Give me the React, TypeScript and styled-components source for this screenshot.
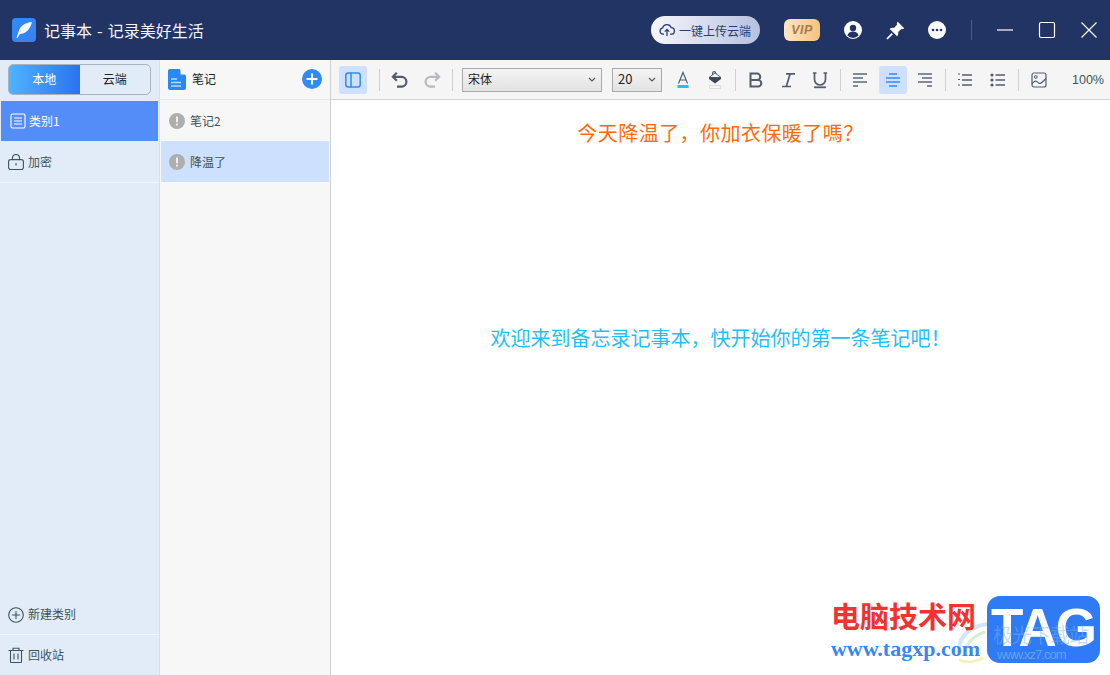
import React from "react";
import styled, { createGlobalStyle } from "styled-components";

const Global = createGlobalStyle`
  html, body { margin: 0; padding: 0; background: #fff; }
  body { width: 1110px; height: 675px; overflow: hidden; font-family: "Noto Sans CJK SC", "Liberation Sans", sans-serif; }
  * { box-sizing: border-box; }
`;

const Page = styled.div`
  position: relative; width: 1110px; height: 675px; display: flex; flex-direction: column; overflow: hidden;
`;
const TitleBar = styled.header`
  height: 60px; flex: none; background: #223464; display: flex; align-items: center; padding-left: 12px;
`;
const AppLogo = styled.div`
  width: 24px; height: 24px; border-radius: 4px; background: linear-gradient(135deg, #2f8bf8, #3d7ff0);
  display: flex; align-items: center; justify-content: center;
`;
const AppTitle = styled.div`
  margin-left: 8px; color: #f2f4f9; font-size: 16px; line-height: 24px; white-space: pre; word-spacing: 1.5px;
`;
const TitleRight = styled.div`
  margin-left: auto; display: flex; align-items: center;
`;
const UploadPill = styled.div`
  width: 109px; height: 28px; border-radius: 14px; background: linear-gradient(90deg, #f6f7fc, #b7c0e0);
  display: flex; align-items: center; padding-left: 8px; gap: 4px; color: #2c3e70; font-size: 12px; margin-right: 24px;
`;
const VipBadge = styled.div`
  width: 36px; height: 22px; border-radius: 6px; background: linear-gradient(90deg, #fde6c6, #f6c27e);
  color: #a67c48; font: italic 700 12.5px "Liberation Sans", sans-serif; letter-spacing: 0.5px;
  display: flex; align-items: center; justify-content: center; margin-right: 12px;
`;
const TitleIcon = styled.div`
  width: 42px; height: 30px; display: flex; align-items: center; justify-content: center;
`;
const TitleSep = styled.div`
  width: 1px; height: 20px; background: #4c5b86; margin: 0 12px 0 13px;
`;

const Body = styled.div`
  flex: 1; display: flex; min-height: 0;
`;
const Sidebar = styled.aside`
  width: 160px; flex: none; background: #e2ecf9; border-right: 1px solid #dcdfe4; display: flex; flex-direction: column;
`;
const SegmentWrap = styled.div`
  height: 41px; padding: 4px 8px 6px;
`;
const Segment = styled.div`
  height: 31px; width: 143px; display: flex; border: 1px solid #a9b2bf; border-radius: 5px; overflow: hidden;
`;
const SegmentItem = styled.div<{ $active?: boolean }>`
  flex: 1; display: flex; align-items: center; justify-content: center; font-size: 12px; padding-bottom: 2px;
  color: ${p => (p.$active ? "#fff" : "#222")};
  background: ${p => (p.$active ? "linear-gradient(90deg, #50b2ff, #2a73ef)" : "transparent")};
`;
const RowLabel = styled.span`
  padding-bottom: 2px;
`;
const CategoryRow = styled.div<{ $active?: boolean }>`
  height: 41px; display: flex; align-items: center; font-size: 12px;
  gap: ${p => (p.$active ? "3px" : "4px")};
  padding-left: ${p => (p.$active ? "9px" : "8px")};
  margin: ${p => (p.$active ? "0 1px" : "0")};
  color: ${p => (p.$active ? "#fff" : "#3d5456")};
  background: ${p => (p.$active ? "#558df8" : "transparent")};
  border-bottom: 1px solid ${p => (p.$active ? "#e2ecf9" : "#f2f6fc")};
`;
const SidebarFoot = styled.div`
  margin-top: auto; display: flex; flex-direction: column;
`;
const FootRow = styled.div<{ $last?: boolean }>`
  height: 40px; display: flex; align-items: center; gap: 4px; padding-left: 8px;
  font-size: 12px; color: #3d5456; border-bottom: ${p => (p.$last ? "none" : "1px solid #f2f6fc")};
`;

const NoteColumn = styled.section`
  width: 171px; flex: none; background: #f7f7f7; border-right: 1px solid #cfcfcf; display: flex; flex-direction: column;
`;
const NoteHead = styled.div`
  height: 40px; display: flex; align-items: center; padding: 0 8px; border-bottom: 1px solid #e3e8ef;
`;
const NoteHeadTitle = styled.span`
  margin-left: 6px; font-size: 12px; color: #222; padding-bottom: 2px;
`;
const AddButton = styled.div`
  margin-left: auto; margin-top: -1px; width: 20px; height: 20px; display: flex;
`;
const NoteRow = styled.div<{ $active?: boolean }>`
  height: 41px; margin: 0 1px; display: flex; align-items: center; gap: 5px; padding: 1px 0 0 8px; font-size: 12px; color: #3d5456;
  background: ${p => (p.$active ? "#cde0fd" : "transparent")};
`;

const Main = styled.main`
  flex: 1; display: flex; flex-direction: column; min-width: 0;
`;
const Toolbar = styled.div`
  height: 40px; flex: none; background: #f5f5f5; border-bottom: 1px solid #d4d4d4; display: flex; align-items: center; padding-left: 8px; gap: 6px;
`;
const ToolButton = styled.div<{ $active?: boolean; $after?: number }>`
  width: 28px; height: 28px; border-radius: 3px; display: flex; align-items: center; justify-content: center;
  margin-right: ${p => p.$after ?? 0}px;
  background: ${p => (p.$active ? "#cde0fd" : "transparent")};
`;
const ToolGroup = styled.div<{ $cols: string; $before?: number }>`
  display: grid; grid-template-columns: ${p => p.$cols};
  margin-left: ${p => p.$before ?? 0}px;
`;
const ToolSep = styled.div`
  width: 1px; height: 22px; background: #d0d0d0;
`;
const FakeSelect = styled.div<{ $w: number; $ml?: number }>`
  width: ${p => p.$w}px; height: 24px; margin-left: ${p => p.$ml ?? 0}px;
  border: 1px solid #a9a9a9; background: linear-gradient(#f4f4f4, #e3e3e3);
  display: flex; align-items: center; justify-content: space-between; padding: 0 5px; font-size: 12px; color: #222;
`;
const SelectValue = styled.span<{ $size?: number }>`
  padding-bottom: 2px; font-size: ${p => p.$size ?? 12}px;
`;
const Zoom = styled.div`
  margin-left: auto; padding-right: 6px; font: 12.5px "Liberation Sans", sans-serif; color: #3d5456;
`;
const Editor = styled.div`
  flex: 1; background: #fff; padding-top: 21px; text-align: center; font-family: "Noto Sans CJK SC", sans-serif;
`;
const NoteHeading = styled.div`
  font-size: 20px; line-height: 24px; color: #ff6a0a; letter-spacing: 0.45px;
`;
const NoteBody = styled.div`
  font-size: 20px; line-height: 24px; margin-top: 181px; color: #1fc0f5;
`;

const Watermark = styled.div`
  position: absolute; right: 10px; bottom: 11px; display: flex; align-items: flex-start; gap: 7px;
`;
const MarkSwirl = styled.div`
  position: absolute; left: 126px; top: 26px; width: 32px; height: 42px; display: flex;
`;
const MarkText = styled.div`
  position: relative; display: flex; flex-direction: column; align-items: flex-start; padding-top: 2px;
`;
const MarkCn = styled.div`
  position: relative; font-size: 29px; line-height: 34px; font-weight: 700; color: #f2322f;
`;
const MarkUrl = styled.div`
  position: relative; font: 700 22px/30px "Liberation Serif", serif; color: #3b87ee; margin-top: 2px;
`;
const TagBox = styled.div`
  position: relative; width: 113px; height: 67px; border-radius: 13px; background: #2f7bf5; color: #fff;
  font: 700 53px/64px "Liberation Sans", sans-serif; letter-spacing: -1px; overflow: hidden; text-align: center;
`;
const TagGhost = styled.div`
  position: absolute; left: 6px; top: 26px; font: 400 20px/26px "Noto Sans CJK SC", sans-serif; color: rgba(120,180,245,.45); white-space: nowrap;
`;
const TagGhostUrl = styled.div`
  position: absolute; left: 10px; bottom: 0; font: 400 13px/16px "Liberation Sans", sans-serif; color: rgba(150,200,250,.5); white-space: nowrap;
`;

const G = "#525c70";

const Svg: React.FC<{ s?: number; w?: number; h?: number; children: React.ReactNode }> = ({ s = 20, w, h, children }) => (
  <svg width={w ?? s} height={h ?? s} viewBox={`0 0 ${w ?? s} ${h ?? s}`} fill="none">{children}</svg>
);

const Line: React.FC<{ lines: [number, number, number][]; c: string; sw?: number }> = ({ lines, c, sw = 1.4 }) => (
  <>{lines.map(([x1, x2, y], i) => <path key={i} d={`M${x1} ${y}H${x2}`} stroke={c} strokeWidth={sw} />)}</>
);

const Alert = () => (
  <Svg s={16}>
    <circle cx="8" cy="8" r="8" fill="#aeaeae" />
    <path d="M8 3.6v5.6" stroke="#eee" strokeWidth="2" />
    <circle cx="8" cy="11.7" r="1.1" fill="#eee" />
  </Svg>
);

const Chevron = () => (
  <Svg w={8} h={6}><path d="M1 1l3 3 3-3" stroke="#555" strokeWidth="1.1" /></Svg>
);

export default function App() {
  return (
    <Page>
      <Global />
      <TitleBar>
        <AppLogo>
          <Svg s={18}>
            <path d="M17 1C10 1.500 5 5 3.500 11L1.500 16.500l1 .4 2.300-4C10 13 15 9 17 1z" fill="#fff" opacity=".94" />
          </Svg>
        </AppLogo>
        <AppTitle>记事本 - 记录美好生活</AppTitle>
        <TitleRight>
          <UploadPill>
            <Svg s={16}>
              <path d="M5 12.2H4A3.2 3.2 0 0 1 3.6 5.9 4.5 4.5 0 0 1 12.2 5.6 3.3 3.3 0 0 1 12 12.2H11" stroke="#2c3e70" strokeWidth="1.3" />
              <path d="M8 14V7.6M5.8 9.6 8 7.4l2.2 2.2" stroke="#2c3e70" strokeWidth="1.3" />
            </Svg>
            一键上传云端
          </UploadPill>
          <VipBadge>VIP</VipBadge>
          <TitleIcon>
            <Svg s={18}>
              <circle cx="9" cy="9" r="9" fill="#fff" />
              <circle cx="9" cy="7" r="3.2" fill="#223464" />
              <path d="M3.4 14.6c.6-2.900 2.900-4.200 5.600-4.200s5 1.300 5.600 4.200A8 8 0 0 1 9 17a8 8 0 0 1-5.600-2.400z" fill="#223464" />
            </Svg>
          </TitleIcon>
          <TitleIcon>
            <Svg s={19}>
              <path d="M11.800.8 18.200 7.200 16.800 8.200 15.600 7.800 12.100 11C12.600 12.700 12.300 14.100 11.100 15.300L3.700 7.900C4.900 6.700 6.300 6.400 8 6.900L11.200 3.400 10.800 2.300z" fill="#fff" />
              <path d="M6.200 12.600 1 18" stroke="#fff" strokeWidth="1.800" />
            </Svg>
          </TitleIcon>
          <TitleIcon>
            <Svg s={18}>
              <circle cx="9" cy="9" r="9" fill="#fff" />
              <circle cx="5" cy="9" r="1.3" fill="#223464" />
              <circle cx="9" cy="9" r="1.3" fill="#223464" />
              <circle cx="13" cy="9" r="1.3" fill="#223464" />
            </Svg>
          </TitleIcon>
          <TitleSep />
          <TitleIcon>
            <Svg s={18}><path d="M1 9h16" stroke="#c9ccd8" strokeWidth="1.6" /></Svg>
          </TitleIcon>
          <TitleIcon>
            <Svg s={18}><rect x="1.500" y="1.500" width="15" height="15" rx="1.500" stroke="#fff" strokeWidth="1.200" /></Svg>
          </TitleIcon>
          <TitleIcon>
            <Svg s={18}><path d="M1.500 1.500l15 15M16.500 1.500l-15 15" stroke="#eef0f6" strokeWidth="1.300" /></Svg>
          </TitleIcon>
        </TitleRight>
      </TitleBar>
      <Body>
        <Sidebar>
          <SegmentWrap>
            <Segment>
              <SegmentItem $active>本地</SegmentItem>
              <SegmentItem>云端</SegmentItem>
            </Segment>
          </SegmentWrap>
          <CategoryRow $active>
            <Svg s={16}>
              <rect x="1" y="1" width="14" height="14" rx="1.500" stroke="#fff" strokeWidth="1.100" />
              <path d="M4 5h8M4 8h8M4 11h8" stroke="#fff" strokeWidth="1.100" />
            </Svg>
            <RowLabel>类别1</RowLabel>
          </CategoryRow>
          <CategoryRow>
            <Svg s={16}>
              <rect x=".6" y="5.600" width="14.800" height="10" rx="2" stroke="#3d5456" strokeWidth="1.100" />
              <path d="M4.500 5.500V4a3.500 3.500 0 0 1 7 0v1.500M8 9v2.500" stroke="#3d5456" strokeWidth="1.100" />
            </Svg>
            <RowLabel>加密</RowLabel>
          </CategoryRow>
          <SidebarFoot>
            <FootRow>
              <Svg s={16}>
                <circle cx="8" cy="8" r="7.300" stroke="#3d5456" strokeWidth="1.100" />
                <path d="M8 4v8M4 8h8" stroke="#3d5456" strokeWidth="1.100" />
              </Svg>
              <RowLabel>新建类别</RowLabel>
            </FootRow>
            <FootRow $last>
              <Svg s={16}>
                <path d="M.5 3.500h15M5 3.300V1.200h6v2.100M2.500 3.500v11.200c0 .5.3.8.8.8h9.400c.5 0 .8-.3.8-.8V3.500M6 6.500v6M10 6.500v6" stroke="#3d5456" strokeWidth="1.100" />
              </Svg>
              <RowLabel>回收站</RowLabel>
            </FootRow>
          </SidebarFoot>
        </Sidebar>
        <NoteColumn>
          <NoteHead>
            <Svg w={18} h={21}>
              <path d="M2 0h9.500L18 6.500V19a2 2 0 0 1-2 2H2a2 2 0 0 1-2-2V2a2 2 0 0 1 2-2z" fill="#2a88f5" />
              <path d="M12.500 0 18 5.500h-5.500z" fill="#fff" />
              <path d="M3 10h6M3 13.500h10M3 17h10" stroke="#bcdcfc" strokeWidth="1.300" />
            </Svg>
            <NoteHeadTitle>笔记</NoteHeadTitle>
            <AddButton>
              <Svg s={20}>
                <circle cx="10" cy="10" r="10" fill="#2f8bf6" />
                <path d="M10 4.500v11M4.500 10h11" stroke="#fff" strokeWidth="2" />
              </Svg>
            </AddButton>
          </NoteHead>
          <NoteRow><Alert /><RowLabel>笔记2</RowLabel></NoteRow>
          <NoteRow $active><Alert /><RowLabel>降温了</RowLabel></NoteRow>
        </NoteColumn>
        <Main>
          <Toolbar>
            <ToolButton $active $after={6}>
              <Svg s={16}>
                <rect x=".8" y="1" width="14.400" height="14" rx="2.500" stroke="#2f8bf6" strokeWidth="1.500" />
                <path d="M6 1v14" stroke="#2f8bf6" strokeWidth="1.500" />
              </Svg>
            </ToolButton>
            <ToolSep />
            <ToolGroup $cols="32px 28px">
              <ToolButton>
                <Svg s={18}>
                  <path d="M5.800 1.800 1.900 5.800l3.900 3.900" stroke={G} strokeWidth="2.200" />
                  <path d="M2 5.800h8.500a4.900 4.900 0 0 1 0 9.800H6" stroke={G} strokeWidth="2.200" />
                </Svg>
              </ToolButton>
              <ToolButton>
                <Svg s={18}>
                  <path d="M12.200 1.800l3.900 4-3.900 3.900" stroke="#b5b9c0" strokeWidth="2.200" />
                  <path d="M16 5.800H7.500a4.900 4.900 0 0 0 0 9.800H12" stroke="#b5b9c0" strokeWidth="2.200" />
                </Svg>
              </ToolButton>
            </ToolGroup>
            <ToolSep />
            <FakeSelect $w={140} $ml={3}>
              <SelectValue>宋体</SelectValue>
              <Chevron />
            </FakeSelect>
            <FakeSelect $w={50} $ml={4}>
              <SelectValue $size={13}>20</SelectValue>
              <Chevron />
            </FakeSelect>
            <ToolGroup $cols="32px 28px" $before={1}>
              <ToolButton>
                <Svg s={18}>
                  <path d="M4.500 12.500 9 1.500l4.500 11M6 9h6" stroke={G} strokeWidth="1.200" />
                  <rect x="3.500" y="14" width="11" height="3" fill="#1fc0f5" />
                </Svg>
              </ToolButton>
              <ToolButton>
                <Svg s={18}>
                  <path d="M6.500 4V2.200A1.600 1.600 0 0 1 9.700 2.200V4" stroke={G} strokeWidth="1.200" />
                  <path d="M3 6.500 9 2l6 4.500z" fill="#f5f5f5" stroke={G} strokeWidth="1" />
                  <path d="M3 6.500h12V8l-6 4.500L3 8z" fill="#3f4759" />
                  <rect x="3.500" y="14.500" width="11" height="3" stroke="#dcdcdc" />
                </Svg>
              </ToolButton>
            </ToolGroup>
            <ToolSep />
            <ToolGroup $cols="32px 32px 28px">
              <ToolButton>
                <Svg s={18}>
                  <path d="M3.500 2.500h6.500a3.200 3.200 0 0 1 0 6.500H3.500zM3.500 9h7.500a3.300 3.300 0 0 1 0 6.600H3.500z" stroke={G} strokeWidth="2" />
                </Svg>
              </ToolButton>
              <ToolButton>
                <Svg s={18}>
                  <path d="M7 2.800h9M3 15.500h9M11 3 7.500 15" stroke={G} strokeWidth="1.700" />
                </Svg>
              </ToolButton>
              <ToolButton>
                <Svg s={18}>
                  <path d="M3.500 2v6.500a5.500 5.500 0 0 0 11 0V2M2 2h3.500M12.500 2H16" stroke={G} strokeWidth="1.700" />
                  <path d="M3 16.300h12" stroke={G} strokeWidth="1.800" />
                </Svg>
              </ToolButton>
            </ToolGroup>
            <ToolSep />
            <ToolGroup $cols="33px 32px 28px" $before={-1}>
              <ToolButton>
                <Svg s={16}>
                  <Line c={G} sw={1.4} lines={[[1, 15, 2], [1, 11, 6], [1, 15, 10], [1, 6, 14]]} />
                </Svg>
              </ToolButton>
              <ToolButton $active>
                <Svg s={16}>
                  <Line c="#2f8bf6" sw={1.5} lines={[[4, 12, 2], [1, 15, 6], [1, 15, 10], [4, 12, 14]]} />
                </Svg>
              </ToolButton>
              <ToolButton>
                <Svg s={16}>
                  <Line c={G} sw={1.4} lines={[[1, 15, 2], [5, 15, 6], [1, 15, 10], [10, 15, 14]]} />
                </Svg>
              </ToolButton>
            </ToolGroup>
            <ToolSep />
            <ToolGroup $cols="33px 28px" $before={-1}>
              <ToolButton>
                <Svg s={16}>
                  <Line c={G} sw={1.5} lines={[[5, 15, 3], [5, 15, 8], [5, 15, 13]]} />
                  <Line c={G} sw={1} lines={[[1, 3, 2], [1, 3, 7.5], [1, 3, 13]]} />
                </Svg>
              </ToolButton>
              <ToolButton>
                <Svg s={16}>
                  <circle cx="2" cy="3" r="1.600" fill={G} /><circle cx="2" cy="8" r="1.600" fill={G} /><circle cx="2" cy="13" r="1.600" fill={G} />
                  <Line c={G} sw={1.5} lines={[[5.5, 15, 3], [5.5, 15, 8], [5.5, 15, 13]]} />
                </Svg>
              </ToolButton>
            </ToolGroup>
            <ToolSep />
            <ToolButton>
              <Svg s={16}>
                <rect x="1" y="1" width="14" height="14" rx="2" stroke={G} strokeWidth="1.200" />
                <circle cx="4.800" cy="5" r="1.400" stroke={G} />
                <path d="M1 12c2.500-3.500 4.500-3.500 6-1.500s3.500 1 8-4" stroke={G} strokeWidth="1.200" />
              </Svg>
            </ToolButton>
            <Zoom>100%</Zoom>
          </Toolbar>
          <Editor>
            <NoteHeading>今天降温了，你加衣保暖了嗎？</NoteHeading>
            <NoteBody>欢迎来到备忘录记事本，快开始你的第一条笔记吧！</NoteBody>
          </Editor>
        </Main>
      </Body>
      <Watermark>
        <MarkText>
          <MarkSwirl>
            <Svg w={32} h={42}>
              <path d="M30 2C14 4 3 14 2 26" stroke="#cfe8f5" strokeWidth="4" />
              <path d="M28 10C16 14 9 22 8 32" stroke="#d8edd2" strokeWidth="3" />
              <path d="M2 38c8 3 16 2 24-2" stroke="#f2efb8" strokeWidth="2.500" />
            </Svg>
          </MarkSwirl>
          <MarkCn>电脑技术网</MarkCn>
          <MarkUrl>www.tagxp.com</MarkUrl>
        </MarkText>
        <TagBox>
          TAG
          <TagGhost>极光下载站</TagGhost>
          <TagGhostUrl>www.xz7.com</TagGhostUrl>
        </TagBox>
      </Watermark>
    </Page>
  );
}
